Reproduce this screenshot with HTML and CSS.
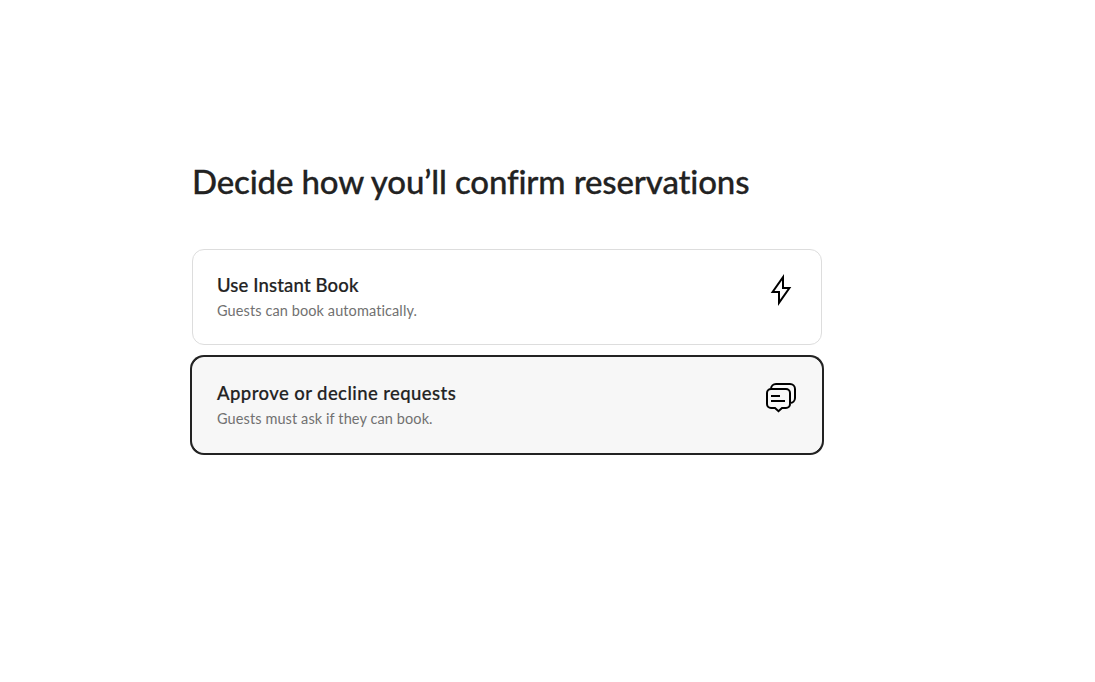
FILE: index.html
```html
<!DOCTYPE html>
<html lang="en">
<head>
<meta charset="utf-8">
<title>Confirm reservations</title>
<link rel="stylesheet" href="styles.css">
</head>
<body>
<main class="page">
  <h1 class="title">Decide how you’ll confirm reservations</h1>
  <div class="options">
    <div class="card">
      <div class="copy">
        <h2 class="name name-instant">Use Instant Book</h2>
        <p class="hint hint-instant">Guests can book automatically.</p>
      </div>
      <svg class="icon" viewBox="0 0 32 32"><path d="M18 3.2V14h6.4L14 28.8V18H7.6z"/></svg>
    </div>
    <div class="card selected">
      <div class="copy">
        <h2 class="name name-request">Approve or decline requests</h2>
        <p class="hint hint-request">Guests must ask if they can book.</p>
      </div>
      <svg class="icon" viewBox="0 0 32 32"><path d="M6 7a5 5 0 0 1 5-5h14a5 5 0 0 1 5 5v9a5 5 0 0 1-5 5M6 7h15a4 4 0 0 1 4 4v11a4 4 0 0 1-4 4h-4l-3.5 3.2L10 26H6a4 4 0 0 1-4-4V11a4 4 0 0 1 4-4zM6 14h9M6 19h14"/></svg>
    </div>
  </div>
</main>
</body>
</html>
```
FILE: styles.css
```css
* { box-sizing: border-box; margin: 0; padding: 0; }
body { min-height: 100vh; background: #fff; color: #222; font-family: Lato, "Open Sans", sans-serif; font-variant-ligatures: none; }
.page { width: 630px; min-height: 100vh; margin-left: 192px; padding-top: 162px; }
.title { font-size: 33px; line-height: 38px; font-weight: 500; letter-spacing: -0.14px; white-space: nowrap; -webkit-text-stroke: 0.3px #222; }
.options { display: flex; flex-direction: column; gap: 12px; margin-top: 49px; }
.card { display: flex; justify-content: space-between; height: 96px; padding: 24px; border: 1px solid #ddd; border-radius: 12px; }
.selected { background: #f7f7f7; border-color: #f7f7f7; box-shadow: 0 0 0 2px #222; }
.name { font-size: 18.5px; line-height: 22px; font-weight: 500; white-space: nowrap; -webkit-text-stroke: 0.2px #222; }
.name-instant { letter-spacing: 0.15px; }
.name-request { letter-spacing: 0.42px; }
.hint { margin-top: 6px; font-size: 14.5px; line-height: 18px; letter-spacing: 0.1px; color: #717171; white-space: nowrap; }
.icon { width: 32px; height: 32px; fill: none; stroke: #000; stroke-width: 2; }
```
